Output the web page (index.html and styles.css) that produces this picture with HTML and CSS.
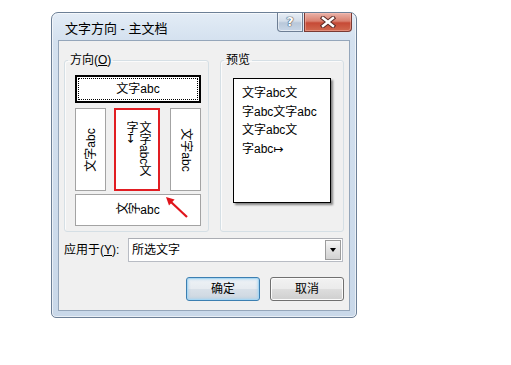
FILE: index.html
```html
<!DOCTYPE html>
<html>
<head>
<meta charset="utf-8">
<title>文字方向</title>
<link rel="stylesheet" href="styles.css">
</head>
<body>
<div class="dialog">
  <div class="titlebar">
    <span class="title">文字方向 - 主文档</span>
    <div class="caps">
      <div class="cap help"><span>?</span></div>
      <div class="cap close">
        <svg width="16" height="12" viewBox="0 0 16 12">
          <path d="M3 2 L13 10 M13 2 L3 10" stroke="#5a2a26" stroke-width="4.4" stroke-linecap="square"/>
          <path d="M3 2 L13 10 M13 2 L3 10" stroke="#ffffff" stroke-width="2.4" stroke-linecap="square"/>
        </svg>
      </div>
    </div>
  </div>
  <div class="client">
    <div class="groups">
      <fieldset class="group dir">
        <legend>方向(<u>O</u>)</legend>
        <div class="dir-body">
          <div class="opt top selected"><span class="txt">文字abc</span></div>
          <div class="opt-row">
            <div class="opt side"><span class="txt ccw">文字abc</span></div>
            <div class="opt mid marked"><span class="txt stack">文字abc文字↦</span></div>
            <div class="opt side"><span class="txt cw">文字abc</span></div>
          </div>
          <div class="opt bottom"><span class="txt rotcjk">文字abc</span></div>
        </div>
      </fieldset>
      <fieldset class="group preview">
        <legend>预览</legend>
        <div class="page">
          <div>文字abc文</div>
          <div>字abc文字abc</div>
          <div>文字abc文</div>
          <div>字abc↦</div>
        </div>
      </fieldset>
    </div>
    <div class="apply">
      <span class="apply-label">应用于(<u>Y</u>):</span>
      <div class="combo">
        <span class="combo-text">所选文字</span>
        <div class="combo-btn"><span class="tri"></span></div>
      </div>
    </div>
    <div class="buttons">
      <div class="btn default">确定</div>
      <div class="btn">取消</div>
    </div>
  </div>
  <svg class="arrow" width="32" height="32" viewBox="0 0 32 32">
    <line x1="10" y1="10" x2="26" y2="25" stroke="#e0141b" stroke-width="2.2"/>
    <polygon points="5,5 13.6,7.6 8,13.4" fill="#e0141b"/>
  </svg>
</div>
</body>
</html>
```

FILE: styles.css
```css
* { box-sizing: border-box; }

body {
  margin: 0;
  background: #ffffff;
  font-family: "Liberation Sans", "Noto Sans CJK SC", "DejaVu Sans", sans-serif;
  font-size: 12px;
  color: #000;
}

.dialog {
  position: relative;
  margin: 12px 0 0 51px;
  width: 306px;
  height: 306px;
  border: 1px solid #6c7f96;
  border-radius: 7px 7px 5px 5px;
  background: linear-gradient(#e3ecf6 0px, #d4e1ef 28px, #c9d8e9 100%);
  box-shadow: inset 0 0 0 1px rgba(255,255,255,0.6);
  padding: 0 6px 6px;
  display: flex;
  flex-direction: column;
}

.titlebar {
  height: 27px;
  display: flex;
  justify-content: space-between;
  align-items: flex-start;
}

.title {
  font-size: 13px;
  line-height: 16px;
  margin: 8px 0 0 7px;
  color: #000;
}

.caps {
  display: flex;
  gap: 1px;
  margin-right: -2px;
}

.cap {
  height: 19px;
  border: 1px solid #6d7e94;
  border-top: none;
  display: flex;
  align-items: center;
  justify-content: center;
}

.help {
  width: 26px;
  border-radius: 0 0 0 4px;
  background: linear-gradient(#e7eef6 0%, #d3dde9 45%, #b9c8da 55%, #c8d6e7 100%);
  box-shadow: inset 0 0 0 1px rgba(255,255,255,0.5);
}

.help span {
  font-family: "DejaVu Sans", sans-serif;
  font-weight: bold;
  font-size: 13px;
  line-height: 14px;
  color: #fff;
  text-shadow: 0 0 1px #3d4a5c, 0 0 1px #3d4a5c, 0 0 1px #3d4a5c;
}

.close {
  width: 48px;
  border-color: #7a3a33;
  border-radius: 0 0 4px 0;
  background: linear-gradient(#eab3a9 0%, #d9806f 45%, #c64a36 55%, #d1694f 100%);
  box-shadow: inset 0 0 0 1px rgba(255,200,190,0.4);
}

.client {
  flex: 1;
  background: #f0f0f0;
  border: 1px solid #95a6ba;
  padding: 12px 5px 0 5px;
  display: flex;
  flex-direction: column;
}

.groups {
  display: flex;
  gap: 11px;
}

.group {
  margin: 0;
  padding: 0;
  min-width: 0;
  height: 179px;
  border: 1px solid #d5dfe5;
  border-radius: 3px;
  box-shadow: inset 1px 1px 0 #fbfbfb;
}

.group legend {
  padding: 0 2px;
  margin-left: 3px;
  line-height: 14px;
}

.dir { width: 145px; }
.preview { width: 124px; }

.dir-body {
  padding: 8px 0 0 10px;
  display: flex;
  flex-direction: column;
}

.opt {
  background: #fff;
  border: 1px solid #a3a3a3;
  display: flex;
  align-items: center;
  justify-content: center;
  position: relative;
}

.txt {
  white-space: nowrap;
  line-height: 14px;
}

.top {
  width: 126px;
  height: 28px;
}

.selected {
  border: 2px solid #000;
}

.selected::after {
  content: "";
  position: absolute;
  inset: 1px;
  border: 1px dotted #000;
}

.opt-row {
  display: flex;
  gap: 8px;
  margin-top: 5px;
  height: 83px;
}

.side { width: 31px; }
.side + .mid { margin-right: 2px; }
.mid { width: 46px; }

.marked { border: 2px solid #e11d22; }

.ccw { transform: rotate(-90deg); }
.cw { transform: rotate(90deg); }

.stack {
  writing-mode: vertical-rl;
  text-orientation: mixed;
  white-space: normal;
  height: 58px;
  line-height: 13px;
  word-break: break-all;
}

.bottom {
  width: 126px;
  height: 32px;
  margin-top: 3px;
}

.rotcjk {
  writing-mode: vertical-rl;
  text-orientation: mixed;
  transform: rotate(-90deg);
}

.page {
  margin: 11px 0 0 12px;
  width: 98px;
  height: 125px;
  background: #fff;
  border: 1px solid #000;
  box-shadow: 2px 2px 2px rgba(0,0,0,0.45);
  padding: 5px 0 0 8px;
  line-height: 18.5px;
  white-space: nowrap;
}

.apply {
  display: flex;
  align-items: center;
  margin-top: 6px;
  height: 24px;
}

.apply-label {
  width: 64px;
  line-height: 14px;
}

.combo {
  width: 215px;
  height: 24px;
  background: #fff;
  border: 1px solid #b8bcc4;
  border-top-color: #abadb3;
  display: flex;
  align-items: center;
  justify-content: space-between;
  padding: 1px 1px 1px 3px;
}

.combo-text { line-height: 14px; }

.combo-btn {
  width: 16px;
  height: 20px;
  border: 1px solid #9c9c9c;
  background: linear-gradient(#f6f6f6, #e2e2e2 50%, #d2d2d2);
  display: flex;
  align-items: center;
  justify-content: center;
}

.tri {
  width: 0;
  height: 0;
  border-left: 3.5px solid transparent;
  border-right: 3.5px solid transparent;
  border-top: 4px solid #000;
}

.buttons {
  display: flex;
  justify-content: flex-end;
  gap: 10px;
  margin-top: 15px;
}

.btn {
  width: 74px;
  height: 24px;
  border: 1px solid #707070;
  border-radius: 3px;
  background: linear-gradient(#f2f2f2 0%, #ebebeb 48%, #dddddd 52%, #cfcfcf 100%);
  box-shadow: inset 0 0 0 1px #fbfbfb;
  display: flex;
  align-items: center;
  justify-content: center;
  line-height: 14px;
}

.btn.default {
  border-color: #3c7fb1;
  background: linear-gradient(#eef3f7 0%, #e6ebf0 48%, #d8e0e8 52%, #ccd6e0 100%);
  box-shadow: inset 0 0 0 1px #a8d6f2, inset 0 0 2px 2px rgba(160,210,240,0.5);
}

.arrow {
  position: absolute;
  left: 109px;
  top: 179px;
}
```
